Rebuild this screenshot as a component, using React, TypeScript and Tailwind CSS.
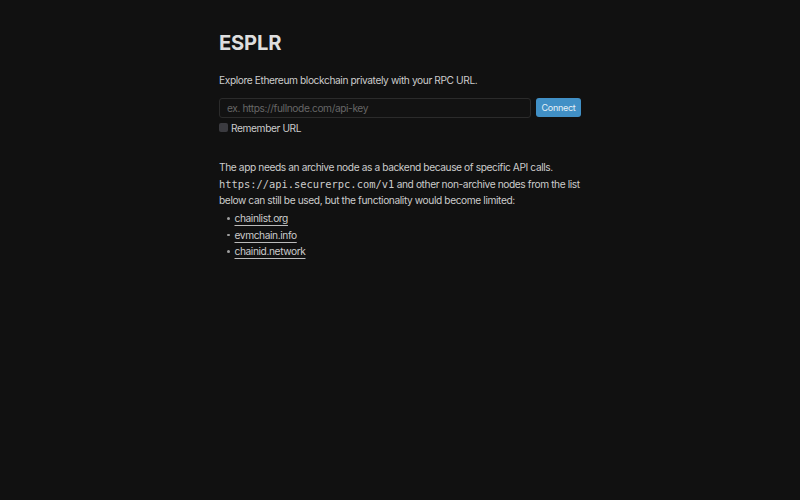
import React from "react";

const links = ["chainlist.org", "evmchain.info", "chainid.network"];

export default function App() {
  return (
    <div
      className="min-h-[500px] w-full bg-[#111111] text-[#cccccc]"
      style={{ fontFamily: "Inter, 'Noto Sans', sans-serif" }}
    >
      <div className="mx-auto w-[362px] pt-[30px]">
        <h1 className="text-[20.2px] font-bold leading-[26px] tracking-[-0.2px] text-[#dedede]">ESPLR</h1>
        <p className="mt-[16px] text-[10.2px] leading-[16.6px] tracking-[-0.4px]">
          Explore Ethereum blockchain privately with your RPC URL.
        </p>
        <div className="mt-[9px] flex items-center gap-[5px]">
          <input
            className="h-[20px] flex-1 rounded-[3px] border border-[#2b2b2b] bg-[#121212] px-[7px] text-[10.2px] tracking-[-0.4px] text-[#ccc] outline-none placeholder:text-[#666666]"
            placeholder="ex. https://fullnode.com/api-key"
          />
          <button className="h-[19px] w-[45px] rounded-[3px] bg-[#4190c6] text-[9px] tracking-[-0.3px] text-[#e6f0f7]">
            Connect
          </button>
        </div>
        <label className="mt-[2px] flex items-center gap-[3px] text-[10.2px] leading-[16.6px] tracking-[-0.4px]">
          <span className="inline-block h-[9px] w-[9px] rounded-[2px] bg-[#3b3b40]" />
          Remember URL
        </label>
        <div className="mt-[23px] text-[10.2px] leading-[16.6px] tracking-[-0.4px]">
          <p>The app needs an archive node as a backend because of specific API calls.</p>
          <p>
            <code
              style={{ fontFamily: "'DejaVu Sans Mono', monospace" }}
              className="text-[10.4px] leading-[16.6px] tracking-normal"
            >
              https://api.securerpc.com/v1
            </code>{" "}
            and other non-archive nodes from the list below can still be used, but the functionality would
            become limited:
          </p>
          <ul className="mt-[1px]">
            {links.map((l) => (
              <li key={l} className="flex items-center">
                <span className="ml-[8px] mr-[5px] inline-block h-[2.5px] w-[2.5px] rounded-full bg-[#a0a0a0]" />
                <a className="underline decoration-[#bbbbbb] underline-offset-[2.5px]">{l}</a>
              </li>
            ))}
          </ul>
        </div>
      </div>
    </div>
  );
}
